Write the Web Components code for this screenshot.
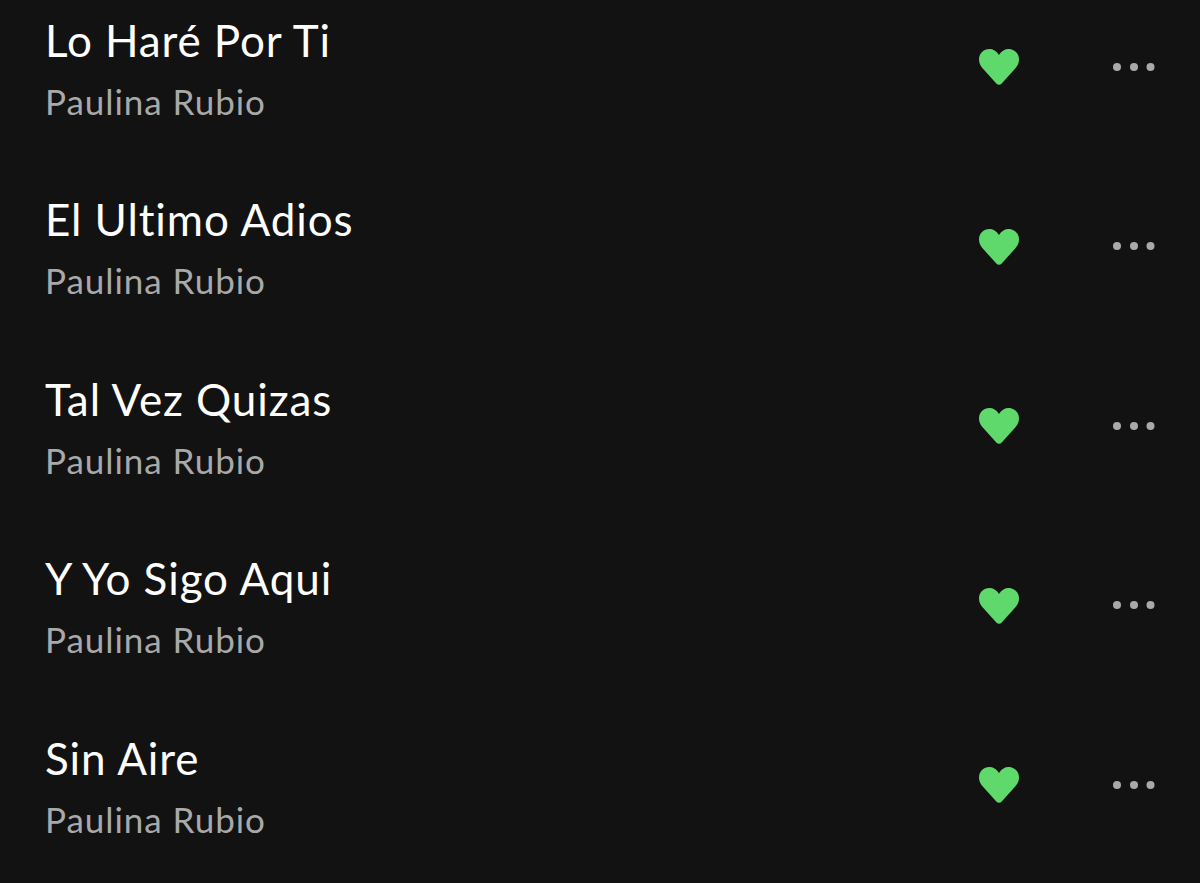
<!DOCTYPE html>
<html>
<head>
<meta charset="utf-8">
<style>
html, body { margin: 0; height: 100%; background: #121212; overflow: hidden; }
</style>
</head>
<body>
<track-list>
  <track-row title="Lo Haré Por Ti" artist="Paulina Rubio"></track-row>
  <track-row title="El Ultimo Adios" artist="Paulina Rubio"></track-row>
  <track-row title="Tal Vez Quizas" artist="Paulina Rubio"></track-row>
  <track-row title="Y Yo Sigo Aqui" artist="Paulina Rubio"></track-row>
  <track-row title="Sin Aire" artist="Paulina Rubio"></track-row>
</track-list>
<script>
class TrackList extends HTMLElement {
    constructor() {
        super();
        this.attachShadow({ mode: 'open' }).innerHTML = `
        <style>
        :host {
            display: grid;
            grid-auto-rows: 179.5px;
            margin-top: -23px;
            font-family: Lato, "Noto Sans", sans-serif;
        }
        </style>
        <slot></slot>
        `;
    }
}

class TrackRow extends HTMLElement {
    constructor() {
        super();
        this.attachShadow({ mode: 'open' }).innerHTML = `
        <style>
        :host {
            display: flex;
            align-items: center;
            padding: 0 44px 0 45px;
        }
        .texto {
            flex-grow: 1;
            padding-top: 8px;
        }
        .titulo {
            color: #fff;
            font-size: 44px;
            line-height: 60px;
            letter-spacing: 0.9px;
        }
        .artista {
            color: #a9a9a9;
            font-size: 35px;
            line-height: 62px;
            letter-spacing: 0.95px;
        }
        .heart {
            display: block;
            width: 42px;
            height: 38px;
            margin-right: 92px;
            margin-top: 1px;
        }
        .dots {
            display: block;
            width: 44px;
            height: 10px;
        }
        </style>
        <div class="texto">
            <div class="titulo"></div>
            <div class="artista"></div>
        </div>
        <svg class="heart" viewBox="0 0 42 38">
            <path fill="#5fd86c" d="M21 7C18.4 2.8 15 1 11.500 1 5.500 1 1 5.600 1 11.500 1 15.300 2.600 18 5 20.700L18.300 35.500C19.900 37.300 22.100 37.300 23.700 35.500L37 20.700C39.400 18 41 15.300 41 11.500 41 5.600 36.500 1 30.500 1 27 1 23.600 2.800 21 7Z"/>
        </svg>
        <svg class="dots" viewBox="0 0 44 10">
            <circle cx="5" cy="5" r="4" fill="#a9a9a9"/>
            <circle cx="22" cy="5" r="4" fill="#a9a9a9"/>
            <circle cx="38.500" cy="5" r="4" fill="#a9a9a9"/>
        </svg>
        `;
    }

    connectedCallback() {
        this.shadowRoot.querySelector('.titulo').textContent = this.getAttribute('title');
        this.shadowRoot.querySelector('.artista').textContent = this.getAttribute('artist');
    }
}

window.customElements.define('track-list', TrackList);
window.customElements.define('track-row', TrackRow);
</script>
</body>
</html>
